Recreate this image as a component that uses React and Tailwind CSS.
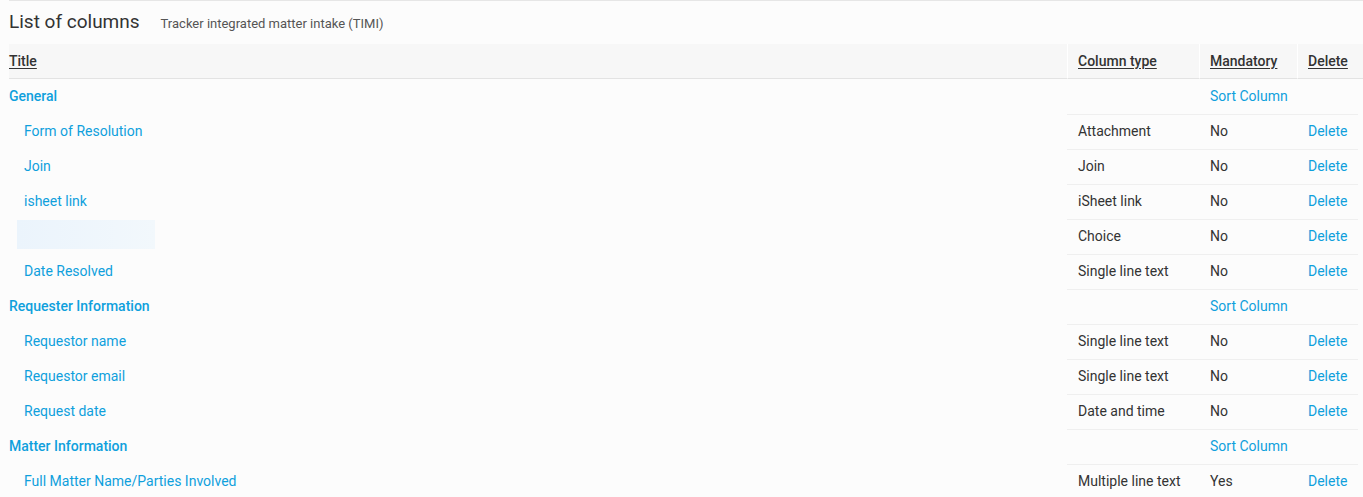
const rows = [
  { section: "General" },
  { title: "Form of Resolution", type: "Attachment", mandatory: "No" },
  { title: "Join", type: "Join", mandatory: "No" },
  { title: "isheet link", type: "iSheet link", mandatory: "No" },
  { blurred: true, type: "Choice", mandatory: "No" },
  { title: "Date Resolved", type: "Single line text", mandatory: "No" },
  { section: "Requester Information" },
  { title: "Requestor name", type: "Single line text", mandatory: "No" },
  { title: "Requestor email", type: "Single line text", mandatory: "No" },
  { title: "Request date", type: "Date and time", mandatory: "No" },
  { section: "Matter Information" },
  { title: "Full Matter Name/Parties Involved", type: "Multiple line text", mandatory: "Yes" },
];

const App = () => {
  return (
    <div className="min-h-[497px] bg-[#fcfcfc] text-[14px] text-[#333] font-['Roboto',sans-serif]">
      <div className="ml-[9px] border-t border-[#e6e6e6]">
        <div className="flex items-baseline h-[43px] pt-[7px]">
          <h1 className="text-[19px] text-[#333]">List of columns</h1>
          <span className="ml-[21px] text-[13px] text-[#555]">Tracker integrated matter intake (TIMI)</span>
        </div>

        <div className="grid grid-cols-[1058px_132px_98px_1fr]">
          <div className="h-[35px] bg-[#f7f7f7] border-b border-[#e3e3e3] flex items-center font-medium">
            <span className="underline underline-offset-2">Title</span>
          </div>
          <div className="h-[35px] bg-[#f7f7f7] border-b border-[#e3e3e3] border-l border-l-white flex items-center pl-[10px] font-medium">
            <span className="underline underline-offset-2">Column type</span>
          </div>
          <div className="h-[35px] bg-[#f7f7f7] border-b border-[#e3e3e3] border-l border-l-white flex items-center pl-[10px] font-medium">
            <span className="underline underline-offset-2">Mandatory</span>
          </div>
          <div className="h-[35px] bg-[#f7f7f7] border-b border-[#e3e3e3] border-l border-l-white flex items-center pl-[10px] font-medium">
            <span className="underline underline-offset-2">Delete</span>
          </div>

          {rows.map((r, i) => {
            const line = i === 0 ? "" : "border-t border-[#efefef] pb-[2px]";
            const gap = i === 0 ? "" : "border-t border-transparent pb-[2px]";
            if (r.section) {
              return [
                <div key={i + "a"} className={`h-[35px] ${gap} flex items-center font-medium text-[#0fa0dc]`}>{r.section}</div>,
                <div key={i + "b"} className={`h-[35px] ${line}`}></div>,
                <div key={i + "c"} className={`h-[35px] ${line} flex items-center pl-[11px] text-[#0fa0dc]`}>Sort Column</div>,
                <div key={i + "d"} className={`h-[35px] ${line} mr-[5px]`}></div>,
              ];
            }
            return [
              <div key={i + "a"} className={`h-[35px] ${gap} flex items-center pl-[15px] text-[#0fa0dc]`}>
                {r.blurred ? (
                  <div className="-ml-[7px] -mt-[4px] w-[138px] h-[29px] bg-gradient-to-r from-[#ebf4fc] to-[#f2f8fc]"></div>
                ) : (
                  r.title
                )}
              </div>,
              <div key={i + "b"} className={`h-[35px] ${line} flex items-center pl-[11px]`}>{r.type}</div>,
              <div key={i + "c"} className={`h-[35px] ${line} flex items-center pl-[11px]`}>{r.mandatory}</div>,
              <div key={i + "d"} className={`h-[35px] ${line} mr-[5px] flex items-center pl-[11px] text-[#0fa0dc]`}>Delete</div>,
            ];
          })}
        </div>
      </div>
    </div>
  );
};

export default App;
